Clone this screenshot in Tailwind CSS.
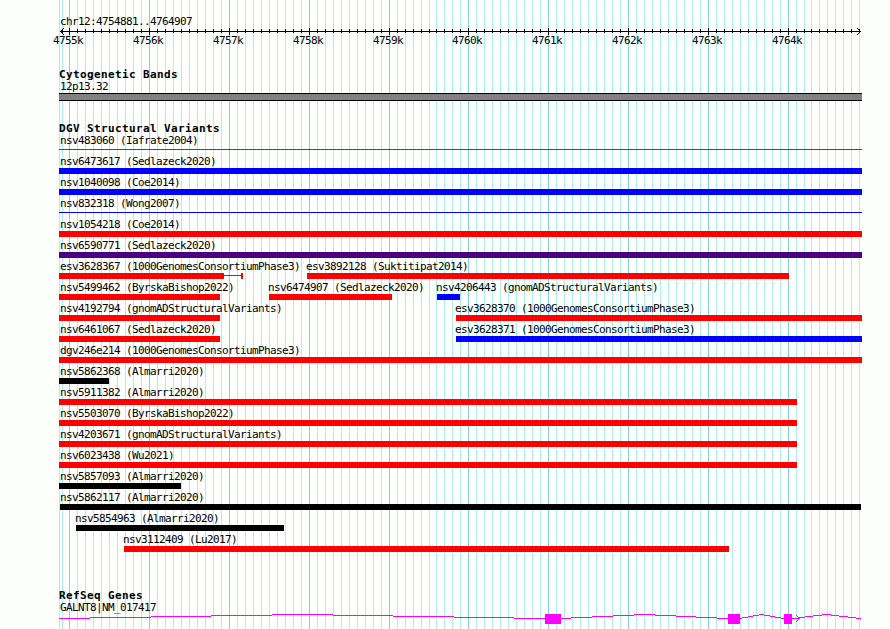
<!DOCTYPE html>
<html lang="en">
<head>
    <meta charset="UTF-8">
    <meta name="viewport" content="width=device-width, initial-scale=1.0">
    <title>chr12:4754881..4764907</title>
    <script src="https://cdn.jsdelivr.net/npm/@tailwindcss/browser@4"></script>
</head>
<body class="bg-[#fdfffc]">
    <div class="relative w-[890px] h-[629px] overflow-hidden font-['DejaVu_Sans_Mono',monospace] text-[11px] leading-[15px] tracking-[-0.622px] text-black whitespace-nowrap">

        <!-- Grid lines behind every track -->
        <svg class="absolute inset-0" width="890" height="629" shape-rendering="crispEdges">
            <path id="minorGrid" fill="#afeeee"/>
            <path id="majorGrid" fill="#87ceeb"/>
        </svg>

        <main class="relative flex flex-col pl-[59px] pt-[14px]">
            <!-- Scale -->
            <section class="h-[53px]">
                <div class="h-[13px] pl-px">chr12:4754881..4764907</div>
                <svg class="block" width="803" height="8" shape-rendering="crispEdges">
                    <path id="ticks" fill="#000"/>
                    <path d="M1 4h1v1h-1zM2 3h1v3h-1zM3 2h1v1h-1zM3 6h1v1h-1zM4 1h1v1h-1zM4 7h1v1h-1zM801 4h1v1h-1zM800 3h1v3h-1zM799 2h1v1h-1zM799 6h1v1h-1zM798 1h1v1h-1zM798 7h1v1h-1z"/>
                </svg>
                <div class="flex -ml-[6px] -mt-[2px]">
                    <span class="w-[80px]">4755k</span>
                    <span class="w-[80px]">4756k</span>
                    <span class="w-[80px]">4757k</span>
                    <span class="w-[80px]">4758k</span>
                    <span class="w-[79px]">4759k</span>
                    <span class="w-[80px]">4760k</span>
                    <span class="w-[80px]">4761k</span>
                    <span class="w-[80px]">4762k</span>
                    <span class="w-[80px]">4763k</span>
                    <span class="w-[80px]">4764k</span>
                </div>
            </section>

            <!-- Cytogenetic Bands -->
            <section class="h-[54px]">
                <h2 class="h-[12px] font-bold text-[11px] leading-[16px] tracking-[0.378px]">Cytogenetic Bands</h2>
                <div class="h-[14px] pl-px">12p13.32</div>
                <div class="h-[8px] w-[803px] border-y border-black bg-[#838083]"></div>
            </section>

            <!-- DGV Structural Variants -->
            <section class="h-[467px]">
                <h2 class="h-[11px] font-bold text-[11px] leading-[16px] tracking-[0.378px]">DGV Structural Variants</h2>
                <div>
                    <div class="h-[21px]">
                        <div class="h-[17px] pt-px pl-px">nsv483060 (Iafrate2004)</div>
                        <div class="h-px w-[803px] bg-[#ff0000]"></div>
                    </div>
                    <div class="h-[21px]">
                        <div class="h-[15px] pt-px pl-px">nsv6473617 (Sedlazeck2020)</div>
                        <div class="h-[6px] w-[803px] bg-[#0000ff]"></div>
                    </div>
                    <div class="h-[21px]">
                        <div class="h-[15px] pt-px pl-px">nsv1040098 (Coe2014)</div>
                        <div class="h-[6px] w-[803px] bg-[#0000ff]"></div>
                    </div>
                    <div class="h-[21px]">
                        <div class="h-[17px] pt-px pl-px">nsv832318 (Wong2007)</div>
                        <div class="h-px w-[803px] bg-[#0000ff]"></div>
                    </div>
                    <div class="h-[21px]">
                        <div class="h-[15px] pt-px pl-px">nsv1054218 (Coe2014)</div>
                        <div class="h-[6px] w-[803px] bg-[#ff0000]"></div>
                    </div>
                    <div class="h-[21px]">
                        <div class="h-[15px] pt-px pl-px">nsv6590771 (Sedlazeck2020)</div>
                        <div class="h-[6px] w-[803px] bg-[#4b0082]"></div>
                    </div>
                    <div class="flex h-[21px]">
                        <div class="w-[248px]">
                            <div class="h-[15px] pt-px pl-px">esv3628367 (1000GenomesConsortiumPhase3)</div>
                            <div class="flex h-[6px]">
                                <div class="w-[165px] bg-[#ff0000]"></div>
                                <div class="mt-[2px] h-px w-[17px] bg-[#ff0000]"></div>
                                <div class="w-[2px] bg-[#ff0000]"></div>
                            </div>
                        </div>
                        <div class="w-[482px]">
                            <div class="h-[15px] pt-px -ml-px">esv3892128 (Suktitipat2014)</div>
                            <div class="h-[6px] bg-[#ff0000]"></div>
                        </div>
                    </div>
                    <div class="flex h-[21px]">
                        <div class="w-[161px]">
                            <div class="h-[15px] pt-px pl-px">nsv5499462 (ByrskaBishop2022)</div>
                            <div class="h-[6px] bg-[#ff0000]"></div>
                        </div>
                        <div class="ml-[49px] w-[123px]">
                            <div class="h-[15px] pt-px -ml-px">nsv6474907 (Sedlazeck2020)</div>
                            <div class="h-[6px] bg-[#ff0000]"></div>
                        </div>
                        <div class="ml-[45px] w-[23px]">
                            <div class="h-[15px] pt-px -ml-px">nsv4206443 (gnomADStructuralVariants)</div>
                            <div class="h-[6px] bg-[#0000ff]"></div>
                        </div>
                    </div>
                    <div class="flex h-[21px]">
                        <div class="w-[161px]">
                            <div class="h-[15px] pt-px pl-px">nsv4192794 (gnomADStructuralVariants)</div>
                            <div class="h-[6px] bg-[#ff0000]"></div>
                        </div>
                        <div class="ml-[236px] w-[406px]">
                            <div class="h-[15px] pt-px -ml-px">esv3628370 (1000GenomesConsortiumPhase3)</div>
                            <div class="h-[6px] bg-[#ff0000]"></div>
                        </div>
                    </div>
                    <div class="flex h-[21px]">
                        <div class="w-[161px]">
                            <div class="h-[15px] pt-px pl-px">nsv6461067 (Sedlazeck2020)</div>
                            <div class="h-[6px] bg-[#ff0000]"></div>
                        </div>
                        <div class="ml-[236px] w-[406px]">
                            <div class="h-[15px] pt-px -ml-px">esv3628371 (1000GenomesConsortiumPhase3)</div>
                            <div class="h-[6px] bg-[#0000ff]"></div>
                        </div>
                    </div>
                    <div class="h-[21px]">
                        <div class="h-[15px] pt-px pl-px">dgv246e214 (1000GenomesConsortiumPhase3)</div>
                        <div class="h-[6px] w-[803px] bg-[#ff0000]"></div>
                    </div>
                    <div class="h-[21px]">
                        <div class="h-[15px] pt-px pl-px">nsv5862368 (Almarri2020)</div>
                        <div class="h-[6px] w-[50px] bg-black"></div>
                    </div>
                    <div class="h-[21px]">
                        <div class="h-[15px] pt-px pl-px">nsv5911382 (Almarri2020)</div>
                        <div class="h-[6px] w-[738px] bg-[#ff0000]"></div>
                    </div>
                    <div class="h-[21px]">
                        <div class="h-[15px] pt-px pl-px">nsv5503070 (ByrskaBishop2022)</div>
                        <div class="h-[6px] w-[738px] bg-[#ff0000]"></div>
                    </div>
                    <div class="h-[21px]">
                        <div class="h-[15px] pt-px pl-px">nsv4203671 (gnomADStructuralVariants)</div>
                        <div class="h-[6px] w-[738px] bg-[#ff0000]"></div>
                    </div>
                    <div class="h-[21px]">
                        <div class="h-[15px] pt-px pl-px">nsv6023438 (Wu2021)</div>
                        <div class="h-[6px] w-[738px] bg-[#ff0000]"></div>
                    </div>
                    <div class="h-[21px]">
                        <div class="h-[15px] pt-px pl-px">nsv5857093 (Almarri2020)</div>
                        <div class="h-[6px] w-[122px] bg-black"></div>
                    </div>
                    <div class="h-[21px] ml-px">
                        <div class="h-[15px] pt-px">nsv5862117 (Almarri2020)</div>
                        <div class="h-[6px] w-[801px] bg-black"></div>
                    </div>
                    <div class="h-[21px] ml-[17px]">
                        <div class="h-[15px] pt-px -ml-px">nsv5854963 (Almarri2020)</div>
                        <div class="h-[6px] w-[208px] bg-black"></div>
                    </div>
                    <div class="h-[21px] ml-[65px]">
                        <div class="h-[15px] pt-px -ml-px">nsv3112409 (Lu2017)</div>
                        <div class="h-[6px] w-[605px] bg-[#ff0000]"></div>
                    </div>
                </div>
            </section>

            <!-- RefSeq Genes -->
            <section>
                <h2 class="h-[12px] font-bold text-[11px] leading-[16px] tracking-[0.378px]">RefSeq Genes</h2>
                <div class="h-[14px] pl-px">GALNT8|NM_017417</div>
                <svg class="block" width="803" height="14" shape-rendering="crispEdges" fill="#ff00ff">
                    <!-- introns -->
                    <path d="M0 4h31v1h-31zM31 3h61v1h-61zM92 2h60v1h-60zM152 1h61v1h-61zM213 0h61v1h-61zM274 1h60v1h-60zM334 2h61v1h-61zM395 3h60v1h-60zM455 4h31v1h-31z"/>
                    <path d="M502 4h10v1h-10zM512 3h21v1h-21zM533 2h21v1h-21zM554 1h21v1h-21zM575 0h21v1h-21zM596 1h21v1h-21zM617 2h20v1h-20zM637 3h21v1h-21zM658 4h11v1h-11z"/>
                    <path d="M681 4h2v1h-2zM683 3h6v1h-6zM689 2h5v1h-5zM694 1h6v1h-6zM700 0h5v1h-5zM705 1h6v1h-6zM711 2h5v1h-5zM716 3h6v1h-6zM722 4h3v1h-3z"/>
                    <path d="M733 4h8v1h-8zM739 3h7v1h-7zM746 2h8v1h-8zM754 1h9v1h-9zM763 0h9v1h-9zM772 1h8v1h-8zM780 2h9v1h-9zM789 3h8v1h-8zM797 4h5v1h-5z"/>
                    <!-- strand arrow -->
                    <path d="M737 1h1v1h-1zM738 2h1v1h-1zM739 3h1v1h-1zM739 5h1v1h-1zM738 6h1v1h-1zM737 7h1v1h-1z"/>
                    <!-- exons -->
                    <rect x="486" y="0" width="16" height="10"/>
                    <rect x="669" y="0" width="12" height="10"/>
                    <rect x="725" y="0" width="8" height="10"/>
                </svg>
            </section>
        </main>
    </div>

    <script>
        // One line every 100 bp, a major one every 1 kb
        let minor = '';
        let major = '';
        let ticks = 'M1 4h801v1h-801z';
        for (let i = -1; i < 100; i++) {
            const x = Math.floor(69.981 + i * 7.9785);
            const isMajor = i % 10 === 0;
            if (isMajor) {
                major += `M${x} 0h1v629h-1z`;
                ticks += `M${x - 59} 1h1v7h-1z`;
            } else {
                minor += `M${x} 0h1v629h-1z`;
                ticks += `M${x - 59} 2h1v4h-1z`;
            }
        }
        minor += 'M59 0h1v629h-1z';
        document.getElementById('minorGrid').setAttribute('d', minor);
        document.getElementById('majorGrid').setAttribute('d', major);
        document.getElementById('ticks').setAttribute('d', ticks);
    </script>
</body>
</html>
